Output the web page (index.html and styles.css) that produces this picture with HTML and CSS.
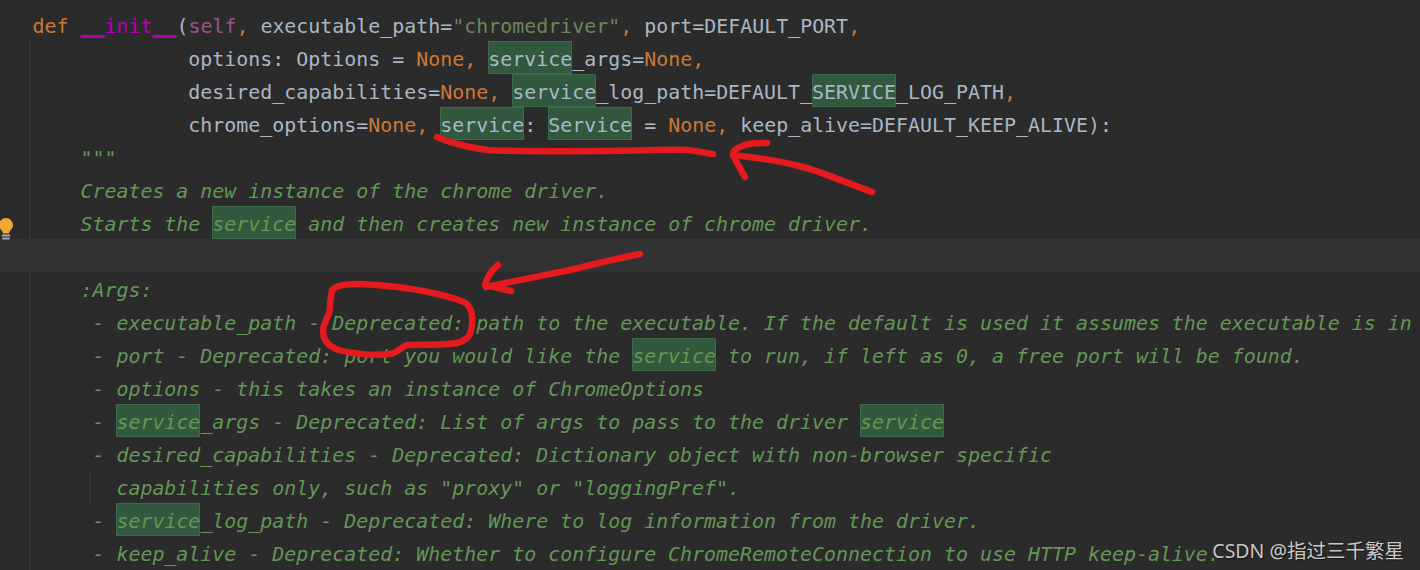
FILE: index.html
```html
<!DOCTYPE html>
<html lang="en">
<head>
<meta charset="utf-8">
<title>chrome webdriver __init__</title>
<link rel="stylesheet" href="styles.css">
</head>
<body>
<main class="editor">
<div class="guide guide-main"></div>
<div class="guide guide-inner"></div>
<div class="row"><span class="k">def</span> <span class="fn"><span class="dunder">__</span>init<span class="dunder">__</span></span>(<span class="self">self</span><span class="k">,</span> executable_path=<span class="str">"chromedriver"</span><span class="k">,</span> port=DEFAULT_PORT<span class="k">,</span></div>
<div class="row">             options: Options = <span class="k">None,</span> <span class="hl">service</span>_args=<span class="k">None,</span></div>
<div class="row">             desired_capabilities=<span class="k">None,</span> <span class="hl">service</span>_log_path=DEFAULT_<span class="hl">SERVICE</span>_LOG_PATH<span class="k">,</span></div>
<div class="row">             chrome_options=<span class="k">None,</span> <span class="hl">service</span>: <span class="hl">Service</span> = <span class="k">None,</span> keep_alive=DEFAULT_KEEP_ALIVE):</div>
<div class="row doc">    """</div>
<div class="row doc">    Creates a new instance of the chrome driver.</div>
<div class="row doc">    Starts the <span class="hl">service</span> and then creates new instance of chrome driver.</div>
<div class="row current"></div>
<div class="row doc">    :Args:</div>
<div class="row doc">     - executable_path - Deprecated: path to the executable. If the default is used it assumes the executable is in</div>
<div class="row doc">     - port - Deprecated: port you would like the <span class="hl">service</span> to run, if left as 0, a free port will be found.</div>
<div class="row doc">     - options - this takes an instance of ChromeOptions</div>
<div class="row doc">     - <span class="hl">service</span>_args - Deprecated: List of args to pass to the driver <span class="hl">service</span></div>
<div class="row doc">     - desired_capabilities - Deprecated: Dictionary object with non-browser specific</div>
<div class="row doc">       capabilities only, such as "proxy" or "loggingPref".</div>
<div class="row doc">     - <span class="hl">service</span>_log_path - Deprecated: Where to log information from the driver.</div>
<div class="row doc">     - keep_alive - Deprecated: Whether to configure ChromeRemoteConnection to use HTTP keep-alive.</div>
<svg class="bulb" viewBox="0 0 16 26" width="16" height="26" aria-hidden="true">
<path class="bulb-glass" d="M7 2a7 7 0 0 0-7 7c0 3 1.700 4.500 3 6 .7.900 1 1.500 1 2.500h6c0-1 .3-1.600 1-2.500 1.300-1.500 3-3 3-6a7 7 0 0 0-7-7z"/>
<path class="bulb-base" d="M3.500 19.500h7M4 22.500h6"/>
</svg>
<svg class="ink" viewBox="0 0 1420 570" width="1420" height="570" aria-hidden="true">
<path d="M437 137C448 142 460 146 487 150C520 152 560 151 600 151C640 151 665 149 687 150C697 151 705 153 713 154"/>
<path d="M767 143C755 143 747 143 740 147C735 149 733 152 733 154C736 162 741 170 745 177"/>
<path d="M733 155C760 158 785 162 803 167C822 172 850 184 872 192"/>
<path d="M640 254C610 260 590 265 570 270C540 276 510 282 486 287"/>
<path d="M498 265C491 271 487 276 485 285C494 287 503 289 511 291"/>
<path d="M332 290C337 285 345 284 360 284C385 285 410 288 433 293C450 297 462 300 467 304C472 309 473 316 472 325C471 335 468 340 457 343C440 346 420 344 407 345C400 348 397 353 390 354C375 356 350 354 336 349C327 345 323 339 323 331C323 322 330 316 330 308C330 302 331 296 332 290"/>
</svg>
<div class="watermark">CSDN @指过三千繁星</div>
</main>
</body>
</html>
```
FILE: styles.css
```css
html, body {
  margin: 0;
  padding: 0;
  background: #2b2b2b;
}

.editor {
  position: relative;
  width: 1420px;
  height: 570px;
  box-sizing: border-box;
  padding-top: 8px;
  overflow: hidden;
  background: #2b2b2b;
  color: #a9b7c6;
  font-family: "DejaVu Sans Mono", "Liberation Mono", monospace;
  font-size: 19.93px;
}

.row {
  position: relative;
  z-index: 1;
  height: 33px;
  padding-left: 32.45px;
  line-height: 38px;
  white-space: pre;
}

.row.current {
  background: #323232;
  z-index: 0;
}

.k { color: #cc7832; }
.fn { color: #b200b2; }
.self { color: #94558d; }
.str { color: #6a8759; }

.dunder {
  text-decoration: underline;
  text-decoration-color: #b200b2;
  text-decoration-thickness: 2px;
  text-underline-offset: 2px;
  text-decoration-skip-ink: none;
}

.doc {
  color: #629755;
  font-style: italic;
}

.hl {
  display: inline-block;
  height: 33px;
  vertical-align: top;
  background: #32593d;
  box-shadow: inset 0 0 0 1px #3b6b48;
}

.guide {
  position: absolute;
  z-index: 2;
  width: 2px;
  background: #343434;
}

.guide-main {
  left: 29px;
  top: 41px;
  bottom: 0;
}

.guide-inner {
  left: 89px;
  top: 470px;
  height: 33px;
}

.bulb {
  position: absolute;
  z-index: 3;
  left: -1px;
  top: 216px;
}

.bulb-glass { fill: #f4a72e; }

.bulb-base {
  fill: none;
  stroke: #a8a8a8;
  stroke-width: 1.800;
  stroke-linecap: round;
}

.ink {
  position: absolute;
  z-index: 4;
  left: 0;
  top: 0;
}

.ink path {
  fill: none;
  stroke: #e51a1e;
  stroke-width: 6.500;
  stroke-linecap: round;
  stroke-linejoin: round;
}

.watermark {
  position: absolute;
  z-index: 5;
  right: 16px;
  top: 537px;
  color: #c8c8c8;
  font-family: "Noto Sans", "Noto Sans CJK SC", sans-serif;
  font-size: 19.5px;
  line-height: 28px;
  text-shadow: 1px 1px 1px rgba(0, 0, 0, 0.5);
  white-space: nowrap;
}
```
